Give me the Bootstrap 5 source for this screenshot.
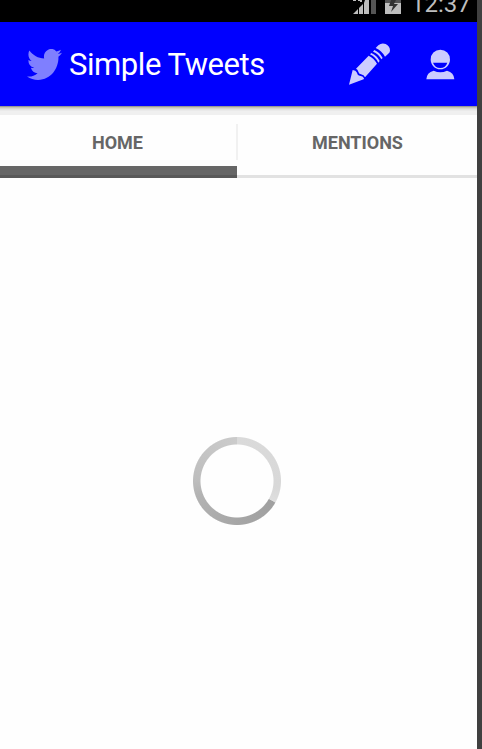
<!DOCTYPE html>
<html lang="en">
<head>
<meta charset="utf-8">
<meta name="viewport" content="width=device-width, initial-scale=1">
<title>Simple Tweets</title>
<link rel="stylesheet" href="https://cdn.jsdelivr.net/npm/bootstrap@5.3.0/dist/css/bootstrap.min.css">
<style>
body{background:#404040;font-family:Roboto,"Liberation Sans",sans-serif;overflow:hidden}
.phone{width:477px;height:749px;background:#fefefe}
.statusbar{height:22px;background:#000;color:#bebebe;overflow:hidden}
.clock{font-size:24px;line-height:28px;margin:-10px 9px 0 10px;width:57px;white-space:nowrap}
.appbar{height:84px;background:#00f;padding:0 22px 0 27px}
.brand{font-size:31px;line-height:40px;letter-spacing:-.44px;margin:2px 0 0 7px;color:#fff;white-space:nowrap}
.profile{margin:1px 0 0 35px}
.shade{height:9px;background:linear-gradient(#999 0 1px,#c4c4b8 1px 2px,#d5d5d0 2px 3px,#e2e2e2 3px 4px,#eaeaea 4px 5px,#f0f0f0 5px)}
.tabstrip{height:63px;background:#fefefe}
.tabstrip .nav-link{height:63px;padding:17px 0 0;border:0;border-radius:0;border-bottom:3px solid #e2e2e2;color:#666;font-size:18px;line-height:22px;font-weight:700;text-align:center}
.tabstrip .tab-home{width:237px;padding-right:2px}
.tabstrip .tab-mentions{width:240px;padding-left:1px}
.tabstrip .nav-link.active{color:#666;border-bottom-color:#595959;box-shadow:inset 0 -9px #666}
.split{left:236px;top:9px;width:2px;height:36px;background:#f1f1f1}
.loader{width:90px;height:90px;margin:258px 0 0 192px}
.ring{width:90px;height:90px;border-radius:50%;background:conic-gradient(#dadada 0deg,#d8d8d8 98deg,#dedede 119deg,#a0a0a0 120deg,#a6a6a6 180deg,#b3b3b3 250deg,#bdbdbd 270deg,#c7c7c7 330deg,#cbcbcb 360deg);-webkit-mask:radial-gradient(circle closest-side,transparent 36px,#000 37px,#000 43.5px,transparent 44.5px);mask:radial-gradient(circle closest-side,transparent 36px,#000 37px,#000 43.5px,transparent 44.5px)}
</style>
</head>
<body>
<main class="phone d-flex flex-column">
  <div class="statusbar d-flex justify-content-end align-items-start">
    <svg width="24" height="14" viewBox="0 0 24 14" aria-label="Signal"><g fill="#bebebe"><path d="M0 14l5-5v5zM6 14V8l4-4v10zM11 14V3l1-3h4v14zM0 0h3v1H0zM5 0h4v2H7V1H5z"/></g><path d="M18 0h5v14h-5z" fill="#555"/></svg>
    <svg class="ms-2" width="16" height="14" viewBox="0 0 16 14" aria-label="Battery"><path d="M0 0h16v3H0z" fill="#555"/><path d="M0 3h16v11H0z" fill="#bebebe"/><path d="M6 0L4 6h4l-2 6 7-8H9l2-4z" fill="#333"/></svg>
    <span class="clock">12:37</span>
  </div>
  <header class="appbar d-flex align-items-center">
    <svg width="35" height="31" viewBox="0 2.2 24 19.6" preserveAspectRatio="none" fill="#7f7fff" aria-hidden="true"><path d="M23.95 4.57a10 10 0 01-2.82.77 4.96 4.96 0 002.16-2.72c-.95.55-2 .95-3.13 1.18a4.92 4.92 0 00-8.38 4.48C7.69 8.09 4.07 6.13 1.64 3.16a4.82 4.82 0 00-.67 2.48c0 1.71.87 3.21 2.19 4.1a4.9 4.9 0 01-2.23-.62v.06a4.92 4.92 0 003.95 4.83 5 5 0 01-2.21.08 4.94 4.94 0 004.6 3.42A9.87 9.87 0 010 19.54a13.99 13.99 0 007.56 2.21c9.05 0 14-7.5 14-13.98 0-.21 0-.42-.02-.63a9.94 9.94 0 002.46-2.55z"/></svg>
    <span class="brand">Simple Tweets</span>
    <svg class="ms-auto" width="43" height="43" viewBox="24 26 129 129" fill="#ccf" aria-label="Compose"><path d="M27 151l11-44q10 1 12 7 2 9 9 10 10 1 13 8l-1 3zM48 103l38-39q16 8 25 24l-36 41q-3-7-12-9-7-2-8-8-2-7-7-9zM90 60l4-4q17 8 25 24l-4 5q-8-17-25-25zM99 52l4-5q17 8 25 24l-4 4q-8-16-25-23zM107 41l8-8q10-9 22-4 13 7 13 20 0 5-6 10l-9 8q-10-18-28-26z"/></svg>
    <svg class="profile" width="29" height="32" viewBox="260 43 87 96" fill="#ccf" aria-label="Profile"><path d="M303 45a29 29 0 0 0-29 30c0 15 13 29 29 29s29-14 29-29a29 29 0 0 0-29-30zM281 84h43q-5 16-21 16t-22-16z" fill-rule="evenodd"/><path d="M261 134q1-21 22-26 20 10 40 0 21 5 22 26z"/></svg>
  </header>
  <div class="shade"></div>
  <nav class="tabstrip nav position-relative">
    <a class="nav-link tab-home active" href="#">HOME</a>
    <a class="nav-link tab-mentions" href="#">MENTIONS</a>
    <span class="split position-absolute"></span>
  </nav>
  <div class="loader" role="status" aria-label="Loading"><div class="ring"></div></div>
</main>
<script src="https://cdn.jsdelivr.net/npm/bootstrap@5.3.0/dist/js/bootstrap.bundle.min.js"></script>
</body>
</html>
